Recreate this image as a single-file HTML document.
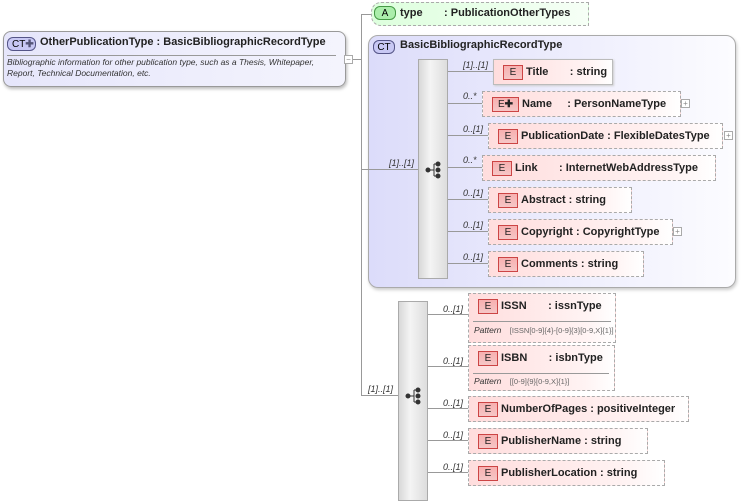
<!DOCTYPE html>
<html><head><meta charset="utf-8"><style>
body{margin:0;width:741px;height:494px;background:#fff;position:relative;overflow:hidden;font-family:"Liberation Sans",sans-serif}
div{box-sizing:border-box}
.a{position:absolute}
.ln{position:absolute;background:#999}
.el{position:absolute;height:26px;background:linear-gradient(90deg,#fdd 0%,#fff3f3 80%,#fff 100%);border:1px dashed #aaa;font-size:11px;font-weight:bold;color:#222}
.el.s{border:1px solid #bbb;box-shadow:1px 1px 2px #ccc}
.eb{position:absolute;left:9px;top:5px;width:20px;height:15px;background:linear-gradient(#f7b0b0,#f6c6c6);border:1px solid #c44;font-size:10px;font-weight:normal;text-align:center;line-height:14px;color:#222}
.et{position:absolute;top:6px;white-space:pre}
.card{position:absolute;font-size:9px;font-style:italic;color:#333}
.plus{position:absolute;width:9px;height:9px;border:1px solid #aaa;font-size:8px;line-height:7px;text-align:center;color:#888;background:#fff}
.bar{position:absolute;background:linear-gradient(90deg,#d8d8d8,#f4f4f4 40%,#ddd);border:1px solid #aaa}
.pat{position:absolute;font-size:7.5px;font-weight:normal;color:#666;white-space:pre}
</style></head><body>
<div class="a" style="left:3px;top:31px;width:343px;height:56px;border:1px solid #999;border-radius:8px;background:linear-gradient(90deg,#e6e6fb,#f4f4fd);box-shadow:1px 2px 3px #bbb"></div>
<div class="a" style="left:7px;top:37px;width:29px;height:14px;border:1px solid #558;border-radius:6px;background:#c8c8f4;font-size:10px;line-height:13px;padding-left:4px">CT<b style="color:#557">✚</b></div>
<div class="a" style="left:40px;top:36px;font-size:11px;font-weight:bold;color:#222">OtherPublicationType : BasicBibliographicRecordType</div>
<div class="ln" style="left:7px;top:55px;width:329px;height:1px;background:#999"></div>
<div class="a" style="left:7px;top:57px;font-size:8.5px;font-style:italic;color:#333;line-height:10.5px">Bibliographic information for other publication type, such as a Thesis, Whitepaper,<br>Report, Technical Documentation, etc.</div>
<div class="plus" style="left:344px;top:55px">−</div>
<div class="ln" style="left:353px;top:59px;width:8px;height:1px"></div>
<div class="ln" style="left:361px;top:14px;width:1px;height:382px"></div>
<div class="ln" style="left:361px;top:14px;width:11px;height:1px"></div>
<div class="a" style="left:371px;top:2px;width:218px;height:24px;border:1px dashed #aaa;background:linear-gradient(90deg,#dfd,#f6fff6);border-radius:10px 0 0 10px"></div>
<div class="a" style="left:374px;top:6px;width:22px;height:14px;border:1px solid #494;border-radius:6px;background:#aea;font-size:10px;text-align:center;line-height:13px">A</div>
<div class="a" style="left:400px;top:7px;font-size:11px;font-weight:bold;color:#222;white-space:pre">type       : PublicationOtherTypes</div>
<div class="a" style="left:368px;top:35px;width:368px;height:253px;border:1px solid #aaa;border-radius:10px;background:linear-gradient(90deg,#dcdcfa,#fcfcff);box-shadow:1px 2px 3px #ccc"></div>
<div class="a" style="left:373px;top:40px;width:22px;height:14px;border:1px solid #558;border-radius:6px;background:#c8c8f4;font-size:10px;text-align:center;line-height:13px">CT</div>
<div class="a" style="left:400px;top:39px;font-size:11px;font-weight:bold;color:#222">BasicBibliographicRecordType</div>
<div class="ln" style="left:361px;top:169px;width:57px;height:1px"></div>
<div class="card" style="left:389px;top:158px">[1]..[1]</div>
<div class="bar" style="left:418px;top:59px;width:30px;height:220px"></div>
<svg class="a" style="left:425px;top:161px" width="18" height="18"><g fill="#333" stroke="#333"><circle cx="3" cy="9" r="2"/><circle cx="13" cy="3" r="2"/><circle cx="13" cy="9" r="2"/><circle cx="13" cy="15" r="2"/><path d="M3 9H9M9 3V15M9 3H13M9 15H13" fill="none"/></g></svg>

<div class="ln" style="left:448px;top:71px;width:45px;height:1px"></div><div class="card" style="left:463px;top:60px">[1]..[1]</div>
<div class="el s" style="left:493px;top:59px;width:120px"><div class="eb">E</div><div class="et" style="left:32px">Title       : string</div></div>
<div class="ln" style="left:448px;top:103px;width:34px;height:1px"></div><div class="card" style="left:463px;top:91px">0..*</div>
<div class="el" style="left:482px;top:91px;width:199px"><div class="eb" style="width:27px">E<b>✚</b></div><div class="et" style="left:39px">Name     : PersonNameType</div></div><div class="plus" style="left:681px;top:99px">+</div>
<div class="ln" style="left:448px;top:135px;width:40px;height:1px"></div><div class="card" style="left:463px;top:124px">0..[1]</div>
<div class="el" style="left:488px;top:123px;width:235px"><div class="eb">E</div><div class="et" style="left:32px">PublicationDate : FlexibleDatesType</div></div><div class="plus" style="left:724px;top:131px">+</div>
<div class="ln" style="left:448px;top:167px;width:34px;height:1px"></div><div class="card" style="left:463px;top:155px">0..*</div>
<div class="el" style="left:482px;top:155px;width:234px"><div class="eb">E</div><div class="et" style="left:32px">Link       : InternetWebAddressType</div></div>
<div class="ln" style="left:448px;top:199px;width:40px;height:1px"></div><div class="card" style="left:463px;top:188px">0..[1]</div>
<div class="el" style="left:488px;top:187px;width:144px"><div class="eb">E</div><div class="et" style="left:32px">Abstract : string</div></div>
<div class="ln" style="left:448px;top:231px;width:40px;height:1px"></div><div class="card" style="left:463px;top:220px">0..[1]</div>
<div class="el" style="left:488px;top:219px;width:185px"><div class="eb">E</div><div class="et" style="left:32px">Copyright : CopyrightType</div></div><div class="plus" style="left:673px;top:227px">+</div>
<div class="ln" style="left:448px;top:263px;width:40px;height:1px"></div><div class="card" style="left:463px;top:252px">0..[1]</div>
<div class="el" style="left:488px;top:251px;width:156px"><div class="eb">E</div><div class="et" style="left:32px">Comments : string</div></div>

<div class="ln" style="left:361px;top:395px;width:37px;height:1px"></div>
<div class="card" style="left:368px;top:384px">[1]..[1]</div>
<div class="bar" style="left:398px;top:301px;width:30px;height:200px"></div>
<svg class="a" style="left:405px;top:387px" width="18" height="18"><g fill="#333" stroke="#333"><circle cx="3" cy="9" r="2"/><circle cx="13" cy="3" r="2"/><circle cx="13" cy="9" r="2"/><circle cx="13" cy="15" r="2"/><path d="M3 9H9M9 3V15M9 3H13M9 15H13" fill="none"/></g></svg>

<div class="ln" style="left:428px;top:314px;width:40px;height:1px"></div><div class="card" style="left:443px;top:304px">0..[1]</div>
<div class="el" style="left:468px;top:293px;width:148px;height:50px"><div class="eb">E</div><div class="et" style="left:32px">ISSN       : issnType</div><div class="ln" style="left:4px;top:27px;width:138px;height:1px"></div><div class="pat" style="left:5px;top:31px"><i style="color:#333;font-size:8.5px">Pattern</i>    [ISSN[0-9]{4}-[0-9]{3}[0-9,X]{1}]</div></div>
<div class="ln" style="left:428px;top:366px;width:40px;height:1px"></div><div class="card" style="left:443px;top:356px">0..[1]</div>
<div class="el" style="left:468px;top:345px;width:147px;height:46px"><div class="eb">E</div><div class="et" style="left:32px">ISBN       : isbnType</div><div class="ln" style="left:4px;top:27px;width:136px;height:1px"></div><div class="pat" style="left:5px;top:30px"><i style="color:#333;font-size:8.5px">Pattern</i>    [[0-9]{9}[0-9,X]{1}]</div></div>
<div class="ln" style="left:428px;top:408px;width:40px;height:1px"></div><div class="card" style="left:443px;top:398px">0..[1]</div>
<div class="el" style="left:468px;top:396px;width:221px"><div class="eb">E</div><div class="et" style="left:32px">NumberOfPages : positiveInteger</div></div>
<div class="ln" style="left:428px;top:440px;width:40px;height:1px"></div><div class="card" style="left:443px;top:430px">0..[1]</div>
<div class="el" style="left:468px;top:428px;width:180px"><div class="eb">E</div><div class="et" style="left:32px">PublisherName : string</div></div>
<div class="ln" style="left:428px;top:472px;width:40px;height:1px"></div><div class="card" style="left:443px;top:462px">0..[1]</div>
<div class="el" style="left:468px;top:460px;width:197px"><div class="eb">E</div><div class="et" style="left:32px">PublisherLocation : string</div></div>
</body></html>
